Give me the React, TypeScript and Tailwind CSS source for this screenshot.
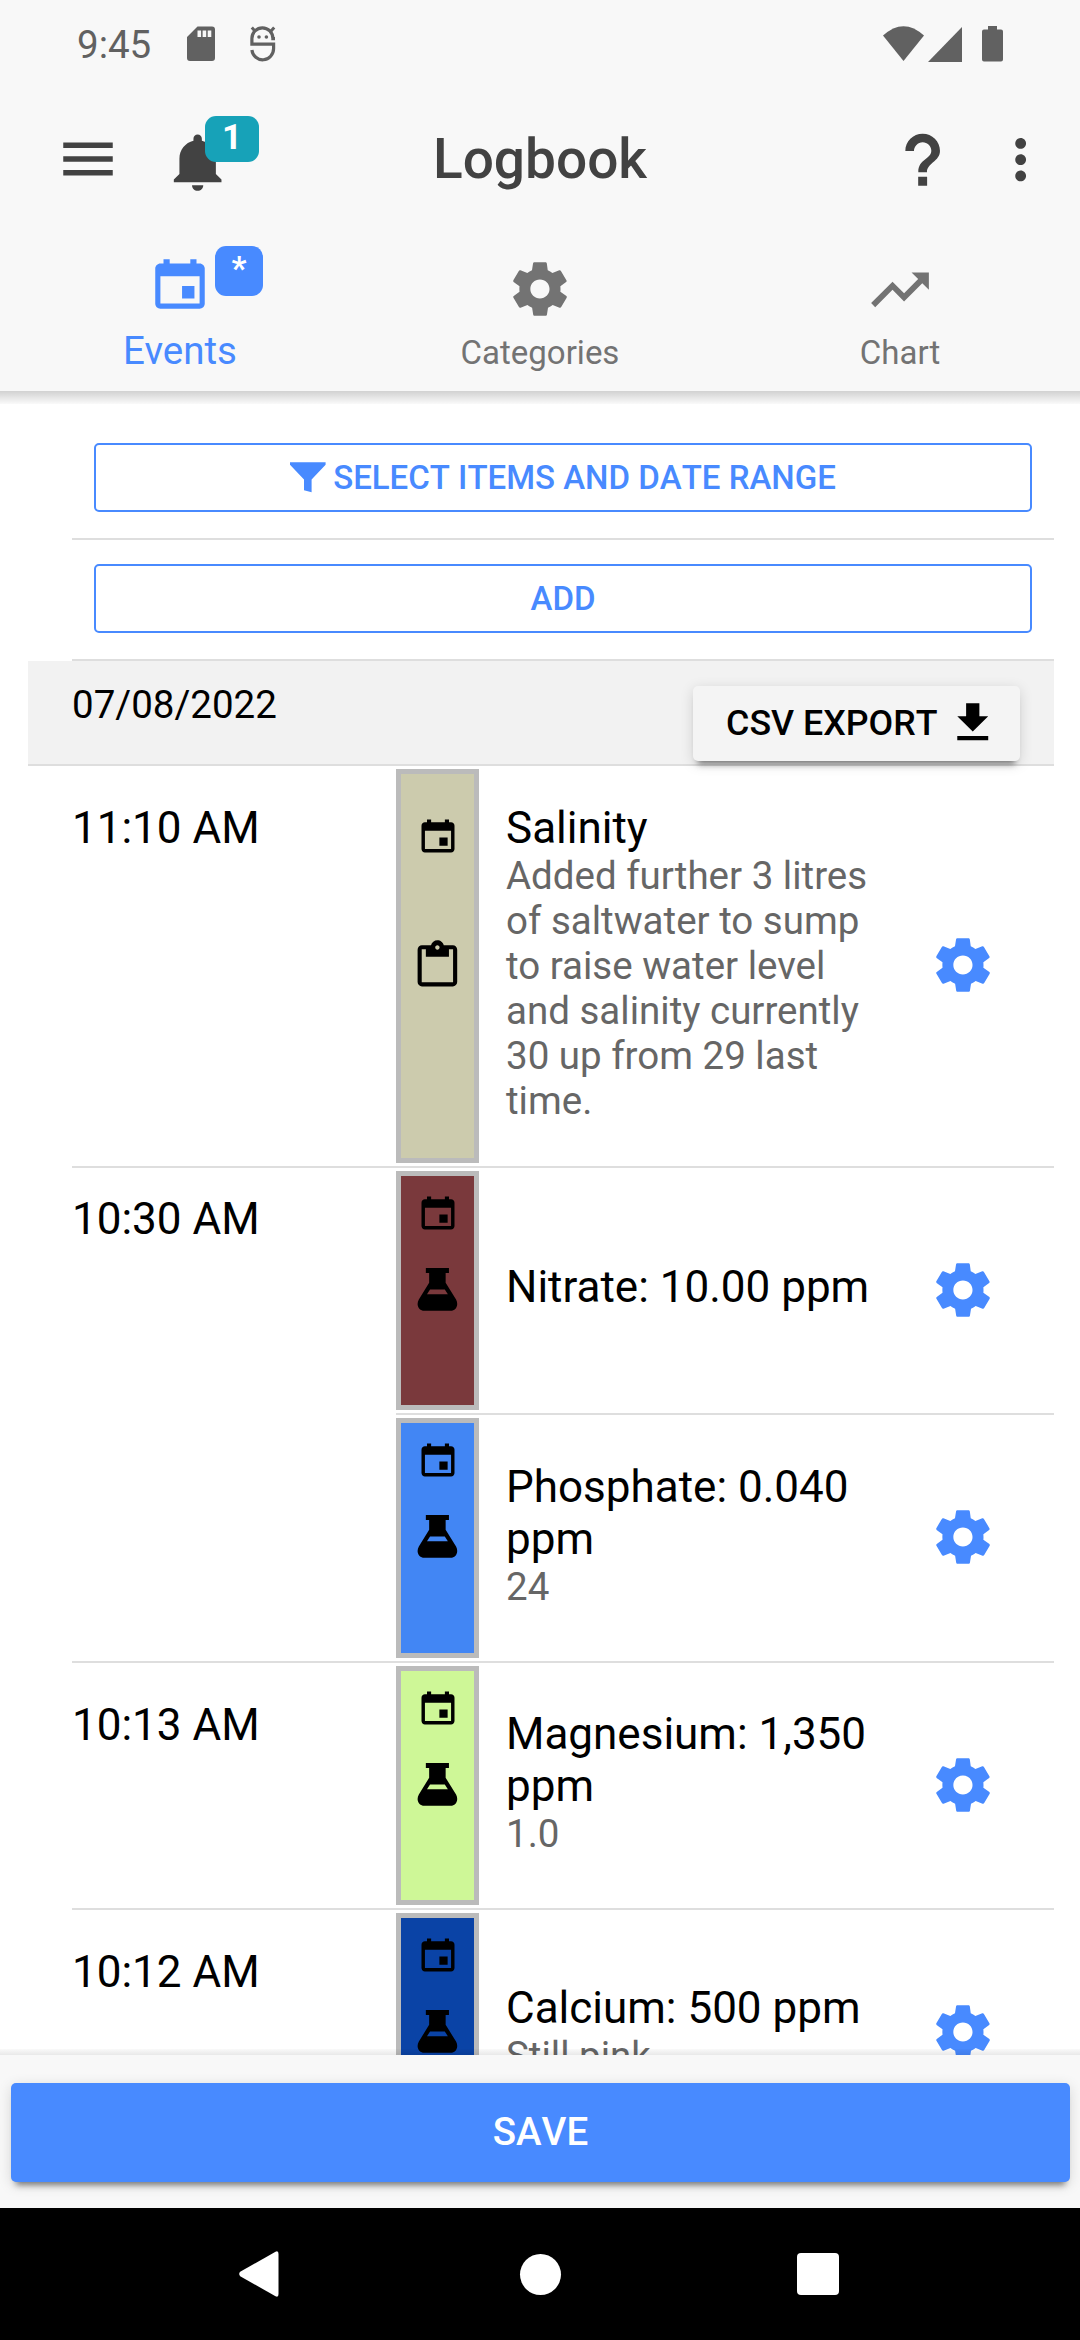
import React from 'react';
import {
  IoMdCalendar,
  IoMdClipboard,
  IoMdDownload,
  IoMdFlask,
  IoMdHelp,
  IoMdMenu,
  IoMdMore,
  IoMdNotifications,
  IoMdSettings,
  IoMdTrendingUp,
} from 'react-icons/io';

function FunnelIcon() {
  return (
    <svg viewBox="0 0 36 31" className="h-[31px] w-[36px] shrink-0" fill="currentColor">
      <path d="M0 0.3h35.6v2.4L21.6 17.4V30.3L14 28.2V17.4L0 2.7z" />
    </svg>
  );
}

function StatusBar() {
  return (
    <div className="flex h-[88px] items-center justify-between px-[77px] text-[#616161]">
      <div className="flex items-center">
        <span className="w-[110px] text-[38.5px] leading-[45px]">9:45</span>
        <svg viewBox="0 0 28 36" className="h-[36px] w-[28px]" fill="currentColor">
          <path
            fillRule="evenodd"
            d="M10.5 0.5H25a3 3 0 0 1 3 3V32a3 3 0 0 1-3 3H3a3 3 0 0 1-3-3V11zM10.5 4.5v6.5h3.6V4.5zM15.6 4.5v6.5h3.6V4.5zM20.7 4.5v6.5h3.6V4.5z"
          />
        </svg>
        <svg viewBox="0 0 26 36" className="ml-[35px] h-[36px] w-[26px]" fill="none" stroke="currentColor" strokeWidth="3.2">
          <path d="M25 12.6H22.9A10.3 10.6 0 0 0 1.9 12.6V18.2H23.6V22.5A10.9 11.3 0 0 1 1.9 24" />
          <path d="M1.8 1.6 5.6 5.8M24.2 1.6 20.4 5.8" strokeWidth="3" />
          <circle cx="9" cy="11" r="1.8" fill="currentColor" stroke="none" />
          <circle cx="16.4" cy="11" r="1.8" fill="currentColor" stroke="none" />
        </svg>
      </div>
      <div className="flex items-center">
        <svg viewBox="0 0 41 35" className="mt-[-1px] h-[35px] w-[41px]" fill="currentColor">
          <path d="M20.5 35 0 9.6Q20.5-9.2 41 9.6z" />
        </svg>
        <svg viewBox="0 0 34 35" className="ml-[4px] h-[35px] w-[34px]" fill="currentColor">
          <path d="M34 0V35H0z" />
        </svg>
        <svg viewBox="0 0 21 36" className="ml-[20px] h-[36px] w-[21px]" fill="currentColor">
          <path d="M6 0h9v3.6h4a2 2 0 0 1 2 2V33.5a2 2 0 0 1-2 2H2a2 2 0 0 1-2-2V5.6a2 2 0 0 1 2-2h4z" />
        </svg>
      </div>
    </div>
  );
}

function Toolbar() {
  return (
    <div className="grid h-[143px] grid-cols-[1fr_auto_1fr] items-center text-[#424242]">
      <div className="flex items-center pl-[55px]">
        <IoMdMenu size={66} />
        <div className="relative ml-[42px] mt-[7px]">
          <IoMdNotifications size={69.3} />
          <span className="absolute left-[42px] top-[-12px] h-[46px] w-[54px] rounded-[11px] bg-[#17a2b8] text-center text-[35px] font-bold leading-[44px] text-white">
            1
          </span>
        </div>
      </div>
      <h1 className="mt-[-2px] text-[55px] font-medium leading-[64px]">Logbook</h1>
      <div className="flex items-center justify-end pr-[25px]">
        <IoMdHelp size={69.3} />
        <IoMdMore size={69.3} className="ml-[28px]" />
      </div>
    </div>
  );
}

function Tabs() {
  return (
    <div className="grid h-[160px] grid-cols-3 text-[33px] leading-[39px] text-[#737373]">
      <div className="flex flex-col items-center pt-[20px] text-[38.5px] leading-[45px] text-[#488aff]">
        <div className="relative">
          <IoMdCalendar size={66} />
          <span className="absolute left-[68px] top-[-5px] h-[50px] w-[48px] rounded-[11px] bg-[#488aff] text-center text-[33px] font-bold leading-[46px] text-white">
            *
          </span>
        </div>
        <span className="mt-[11px]">Events</span>
      </div>
      <div className="flex flex-col items-center pt-[25px]">
        <IoMdSettings size={66} />
        <span className="mt-[11px]">Categories</span>
      </div>
      <div className="flex flex-col items-center pt-[25px]">
        <IoMdTrendingUp size={66} />
        <span className="mt-[11px]">Chart</span>
      </div>
    </div>
  );
}

type Entry = {
  title: string;
  note?: string;
  color: string;
  height: string;
  kind: 'note' | 'test';
};

const groups: { time: string; timePad: string; entries: Entry[] }[] = [
  {
    time: '11:10 AM',
    timePad: 'pt-[36px]',
    entries: [
      {
        title: 'Salinity',
        note: 'Added further 3 litres of saltwater to sump to raise water level and salinity currently 30 up from 29 last time.',
        color: 'bg-[#cccbad]',
        height: 'h-[400px]',
        kind: 'note',
      },
    ],
  },
  {
    time: '10:30 AM',
    timePad: 'pt-[25px]',
    entries: [
      { title: 'Nitrate: 10.00 ppm', color: 'bg-[#7a393c]', height: 'h-[247px]', kind: 'test' },
      { title: 'Phosphate: 0.040 ppm', note: '24', color: 'bg-[#4286f4]', height: 'h-[246px]', kind: 'test' },
    ],
  },
  {
    time: '10:13 AM',
    timePad: 'pt-[36px]',
    entries: [{ title: 'Magnesium: 1,350 ppm', note: '1.0', color: 'bg-[#cef797]', height: 'h-[245px]', kind: 'test' }],
  },
  {
    time: '10:12 AM',
    timePad: 'pt-[36px]',
    entries: [{ title: 'Calcium: 500 ppm', note: 'Still pink', color: 'bg-[#0a43a6]', height: 'h-[246px]', kind: 'test' }],
  },
];

function EntryRow({ entry }: { entry: Entry }) {
  return (
    <div className={`flex items-center border-b-2 border-[#dedede] last:border-b-0 ${entry.height}`}>
      <div
        className={`my-[3px] flex w-[83px] shrink-0 flex-col items-center self-stretch border-5 border-[#bbb] text-black ${entry.color} ${
          entry.kind === 'note' ? 'gap-[79px] pt-[40px]' : 'gap-[28px] pt-[15px]'
        }`}
      >
        <IoMdCalendar size={44} className="shrink-0" />
        {entry.kind === 'note' ? (
          <IoMdClipboard size={52.8} className="shrink-0" />
        ) : (
          <IoMdFlask size={52.8} className="shrink-0" />
        )}
      </div>
      <div className="ml-[27px] w-[372px] pb-[7px]">
        <h2 className="text-[44px] leading-[52px] text-black">{entry.title}</h2>
        {entry.note && <p className="mt-[-1px] text-[38.5px] leading-[45px] text-[#666]">{entry.note}</p>}
      </div>
      <IoMdSettings size={66} className="mb-[2px] ml-[52px] shrink-0 text-[#488aff]" />
    </div>
  );
}

export default function App() {
  return (
    <div className="flex h-[2340px] w-[1080px] flex-col overflow-hidden bg-white font-['Roboto',sans-serif]">
      <header className="shrink-0 bg-[#f8f8f8]">
        <StatusBar />
        <Toolbar />
        <Tabs />
      </header>
      <div className="h-[13px] shrink-0 bg-linear-to-b from-black/18 to-black/2" />

      <main className="relative min-h-0 flex-1 overflow-hidden pl-[28px] pr-[26px]">
        <div className="ml-[44px] border-b-2 border-[#dedede] px-[22px] pt-[39px] pb-[26px]">
          <button className="flex h-[69px] w-full items-center justify-center gap-[7px] rounded-[5px] border-2 border-[#488aff] text-[33px] font-medium leading-[39px] text-[#488aff] [font-kerning:none]">
            <FunnelIcon />
            <span>SELECT ITEMS AND DATE RANGE</span>
          </button>
        </div>
        <div className="ml-[44px] border-b-2 border-[#dedede] px-[22px] pt-[24px] pb-[26px]">
          <button className="flex h-[69px] w-full items-center justify-center rounded-[5px] border-2 border-[#488aff] text-[33px] font-medium leading-[39px] text-[#488aff]">
            <span>ADD</span>
          </button>
        </div>
        <div className="relative z-10 flex h-[105px] justify-between border-b-2 border-[#dedede] bg-[#f2f2f2] pl-[44px] pr-[34px]">
          <span className="pt-[21px] text-[38.5px] leading-[45px]">07/08/2022</span>
          <button className="mt-[25px] flex h-[75px] w-[327px] items-center justify-end gap-[10px] rounded-[5px] bg-[#f4f4f4] pr-[23px] pb-[2px] text-[35.75px] font-medium leading-[42px] text-black shadow-[0_8px_6px_-5px_rgba(0,0,0,0.45),0_3px_14px_rgba(0,0,0,0.14)] [font-kerning:none]">
            <span>CSV EXPORT</span>
            <IoMdDownload size={49.5} className="mt-[-2px]" />
          </button>
        </div>

        {groups.map((group) => (
          <section key={group.time} className="ml-[44px] flex border-b-2 border-[#dedede]">
            <span className={`w-[324px] shrink-0 text-[44px] leading-[52px] text-black ${group.timePad}`}>{group.time}</span>
            <div className="flex-1">
              {group.entries.map((entry) => (
                <EntryRow key={entry.title} entry={entry} />
              ))}
            </div>
          </section>
        ))}
        <div className="absolute inset-x-0 bottom-0 h-[6px] bg-linear-to-b from-black/2 to-black/9" />
      </main>

      <footer className="h-[153px] shrink-0 bg-[#f8f8f8] pt-[28px] pl-[11px] pr-[10px]">
        <button className="h-[99px] w-full rounded-[5px] bg-[#488aff] pb-[3px] text-[38.5px] font-medium leading-[45px] text-white shadow-[0_8px_6px_-5px_rgba(0,0,0,0.45),0_3px_14px_rgba(0,0,0,0.14)] [font-kerning:none]">
          <span>SAVE</span>
        </button>
      </footer>

      <nav className="grid h-[132px] shrink-0 grid-cols-[259px_1fr_259px] items-center bg-black text-white">
        <svg viewBox="0 0 40 46" className="mr-[-20px] h-[46px] w-[40px] justify-self-end" fill="currentColor">
          <path d="M36.5 0.8Q39.5-0.8 39.5 3V43Q39.5 46.8 36.5 45.2L1.2 25.2Q-0.8 23 1.2 20.8z" />
        </svg>
        <div className="size-[41px] justify-self-center rounded-full bg-white" />
        <div className="ml-[-24px] size-[42px] rounded-[4px] bg-white" />
      </nav>
    </div>
  );
}
